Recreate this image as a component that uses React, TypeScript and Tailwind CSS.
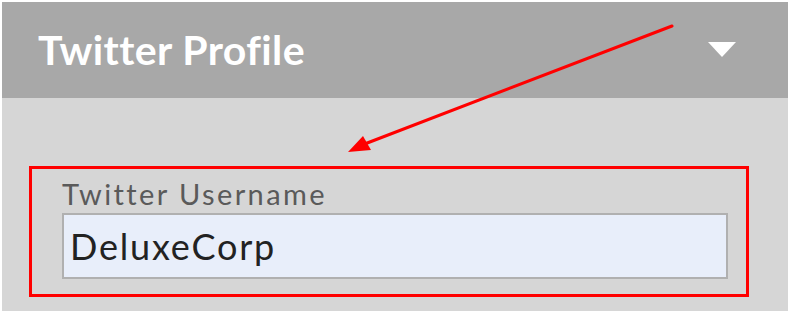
export default function App() {
  return (
    <div className="relative w-[793px] h-[315px] bg-white pt-[2px] pl-[2px] overflow-hidden" style={{ fontFamily: "Lato, 'Open Sans', sans-serif" }}>
      <div className="w-[786px]">
        <div className="h-[96px] bg-[#a8a8a8] flex items-center justify-between pl-[36px] pr-[51px]">
          <h2 className="text-[41px] font-bold tracking-[0.4px] text-white leading-none pb-[2px]">Twitter Profile</h2>
          <svg width="30" height="17" viewBox="0 0 30 17" className="mb-[2px]">
            <polygon points="1,1 29,1 15,16" fill="#ffffff" />
          </svg>
        </div>
        <div className="h-[213px] bg-[#d6d6d6] pt-[68px] pl-[27px]">
          <div className="w-[720px] h-[131px] border-[3px] border-[#ff0000] pl-[30px] pt-[10px]">
            <label className="block text-[29px] tracking-[2.4px] text-[#5a5a5a] leading-none">Twitter Username</label>
            <div className="mt-[5px] w-[666px] h-[66px] bg-[#e8eefa] border-2 border-[#b0b0b0] flex items-center pl-[6px]">
              <span className="text-[36px] tracking-[1.8px] text-[#222222] leading-none">DeluxeCorp</span>
            </div>
          </div>
        </div>
      </div>
      <svg className="absolute left-0 top-0 pointer-events-none" width="793" height="315">
        <line x1="672" y1="26" x2="362" y2="145" stroke="#ff0000" strokeWidth="3" strokeLinecap="round" />
        <polygon points="348,152 363,136 371,150" fill="#ff0000" />
      </svg>
    </div>
  );
}
